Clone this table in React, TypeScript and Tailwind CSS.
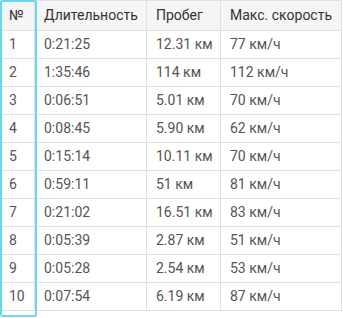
import React from 'react'

const rows = [
  ['1', '0:21:25', '12.31 км', '77 км/ч'],
  ['2', '1:35:46', '114 км', '112 км/ч'],
  ['3', '0:06:51', '5.01 км', '70 км/ч'],
  ['4', '0:08:45', '5.90 км', '62 км/ч'],
  ['5', '0:15:14', '10.11 км', '70 км/ч'],
  ['6', '0:59:11', '51 км', '81 км/ч'],
  ['7', '0:21:02', '16.51 км', '83 км/ч'],
  ['8', '0:05:39', '2.87 км', '51 км/ч'],
  ['9', '0:05:28', '2.54 км', '53 км/ч'],
  ['10', '0:07:54', '6.19 км', '87 км/ч'],
]

const cols = 'grid grid-cols-[35px_112px_74px_121px]'

export default function App() {
  return (
    <div className="relative w-[343px] h-[318px] bg-white font-['Roboto',sans-serif] text-[14px]">
      <div className="w-[342px] border-t border-r border-[#e0e0e0]">
        <div className={`${cols} h-[30px] bg-[#f5f5f5] border-b border-[#e0e0e0] text-[#333]`}>
          <div className="flex items-center pl-[9px] border-r border-[#e0e0e0]">№</div>
          <div className="flex items-center pl-[9px] border-r border-[#e0e0e0]">Длительность</div>
          <div className="flex items-center pl-[9px] border-r border-[#e0e0e0]">Пробег</div>
          <div className="flex items-center pl-[9px]">Макс. скорость</div>
        </div>
        {rows.map((r) => (
          <div key={r[0]} className={`${cols} h-[28px] border-b border-[#e0e0e0] text-[#555]`}>
            <div className="flex items-center pl-[9px] border-r border-[#e0e0e0]">{r[0]}</div>
            <div className="flex items-center pl-[9px] border-r border-[#e0e0e0]">{r[1]}</div>
            <div className="flex items-center pl-[9px] border-r border-[#e0e0e0]">{r[2]}</div>
            <div className="flex items-center pl-[9px]">{r[3]}</div>
          </div>
        ))}
      </div>
      <div className="absolute left-0 top-0 w-[37px] h-[317px] border-2 border-[#6ad8ec] rounded-[3px] pointer-events-none" />
    </div>
  )
}
